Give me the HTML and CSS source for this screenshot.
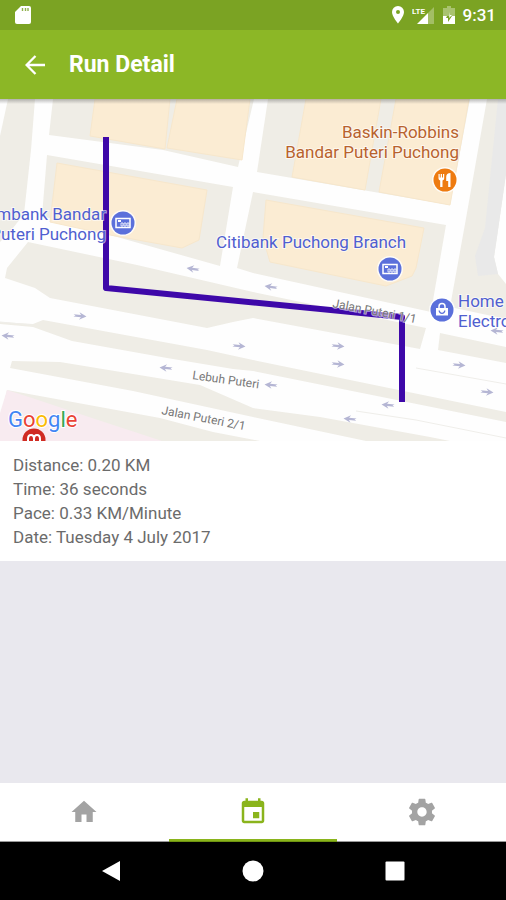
FILE: index.html
```html
<!DOCTYPE html>
<html lang="en">
<head>
    <meta charset="UTF-8">
    <meta name="viewport" content="width=device-width, initial-scale=1.0">
    <title>Run Detail</title>
    <link rel="stylesheet" href="styles.css">
</head>
<body>
    <div class="status-bar">
        <svg class="status-icon sd-icon" width="16" height="20" viewBox="0 0 16 20">
            <path fill="#fff" d="M6 1h8a2 2 0 0 1 2 2v14a2 2 0 0 1-2 2H2a2 2 0 0 1-2-2V7z"/>
            <path stroke="#8fb04c" stroke-width="1.4" d="M7.5 3v3M10.5 3v3M13 3v3"/>
        </svg>
        <svg class="status-icon" width="12" height="18" viewBox="0 0 12 18">
            <path fill="#fff" fill-rule="evenodd" d="M6 0a6 6 0 0 1 6 6c0 4.500-6 11.500-6 11.500S0 10.500 0 6a6 6 0 0 1 6-6zm0 4a2 2 0 1 0 0 4 2 2 0 0 0 0-4z"/>
        </svg>
        <svg class="status-icon" width="23" height="20" viewBox="0 0 23 20">
            <path fill="#fff" fill-opacity=".3" d="M22 2v17h-6V8z"/>
            <path fill="#fff" d="M16 8v11H5z"/>
            <path class="lte-back" d="M0 0h13v9.500H0z"/>
            <text class="lte" x="0" y="9">LTE</text>
        </svg>
        <svg class="status-icon" width="12" height="18" viewBox="0 0 12 18">
            <path fill="#fff" fill-opacity=".35" d="M4 0h4v2h4v8H0V2h4z"/>
            <path fill="#fff" d="M0 10h4l-1 2h2v4l4-6h3v8H0z"/>
            <path fill="#fff" d="M7 6v3h2l-3 3z"/>
        </svg>
        <span class="clock">9:31</span>
    </div>

    <header class="app-bar">
        <button class="back-btn" type="button" aria-label="Back">
            <svg width="20" height="20" viewBox="0 0 20 20">
                <path fill="none" stroke="#fff" stroke-width="2.300" d="M20 10H2M10.500 1L1.600 10l8.900 9"/>
            </svg>
        </button>
        <h1>Run Detail</h1>
    </header>

    <main>
        <svg class="map" viewBox="0 99 506 342" role="img" aria-label="Map of the run">
            <defs>
                <path id="arrow" d="M-6.500-1.100H1l-1.800-2.700L6.500 0l-7.300 3.800L1 1.100h-7.500l2-1.100z"/>
                <g id="bank">
                    <circle class="pin-ring" r="13"/>
                    <circle r="11.500" fill="#5b70db"/>
                    <path fill="none" stroke="#fff" stroke-width="1.500" d="M-7-4.500H7v9H-7z"/>
                    <path fill="#fff" d="M-5-3h3v2h-3z"/>
                    <path fill="none" stroke="#fff" stroke-width=".8" d="M-2 0h2v3h-2zM1 0h2v3H1zM4 0h2v3H4z"/>
                </g>
                <linearGradient id="barShadow" x1="0" y1="0" x2="0" y2="1">
                    <stop offset="0" stop-color="#555" stop-opacity=".4"/>
                    <stop offset="1" stop-color="#555" stop-opacity="0"/>
                </linearGradient>
            </defs>

            <!-- roads are the white ground, land blocks go on top -->
            <rect y="99" width="506" height="342" fill="#fefefe"/>
            <g class="land">
                <path d="M8 99h27l-4 51-7 64-11 14-13 14V136z"/>
                <path d="M53 99h201l-16 68-75-17-114-15z"/>
                <path d="M47 155l186 32-13 79-110-31-68-19z"/>
                <path d="M268 99h202l-20 106-193-33z"/>
                <path d="M253 192l193 33-15 87-178-39-16-5z"/>
                <path d="M487 99h19v75l-8 56-4 27 4 17 8 10v35l-56-12 15-83z"/>
                <path d="M28 242l109 23 116 27 173 36-6 21-167-31-20 4-26 6-157-30-15-10-30-10 2-10z"/>
                <path d="M440 333l66 14v16l-68-13z"/>
                <path d="M0 322l33 2 10-4 164 30 46 10 170 35 83 17v10l-253-51-20-2-66-11-95-17-39-14-33-3z"/>
                <path d="M12 361l48 1 140 23 53 23 67 9 110 20 20 4h-84l-113-24-120-26-123-23z"/>
                <path d="M7 390l153 28 53 14 47 9H0v-22z"/>
            </g>
            <path fill="#f8ebf0" d="M7 390l28 9 60 20 67 22H0v-28z"/>
            <path fill="#e9e9e9" d="M498 99h8v75l-8 56-4 27 4 17-20 2-3-20 10-28z"/>
            <path class="lane" d="M356 411l60 9 90 18M416 368l90 16M0 322l33 3"/>

            <g class="building">
                <path d="M95 99h75l-5 50-75-13z"/>
                <path d="M177 99h73l-8 61-75-12z"/>
                <path d="M57 163l150 27-8 50-17 8-72-13-60-13z"/>
                <path d="M306 99h75l-16 91-73-13z"/>
                <path d="M396 99h73l-19 106-71-13z"/>
                <path d="M266 200l158 28-8 40-4 8-26 10-116-24-7-24z"/>
            </g>

            <g class="arrows">
                <use href="#arrow" transform="translate(193 269) rotate(188)"/>
                <use href="#arrow" transform="translate(271 287) rotate(188)"/>
                <use href="#arrow" transform="translate(80 316) rotate(5)"/>
                <use href="#arrow" transform="translate(239 346) rotate(5)"/>
                <use href="#arrow" transform="translate(8 336) rotate(185)"/>
                <use href="#arrow" transform="translate(166 368) rotate(185)"/>
                <use href="#arrow" transform="translate(271 385) rotate(185)"/>
                <use href="#arrow" transform="translate(338 346) rotate(5)"/>
                <use href="#arrow" transform="translate(338 364) rotate(5)"/>
                <use href="#arrow" transform="translate(459 365) rotate(5)"/>
                <use href="#arrow" transform="translate(487 392) rotate(5)"/>
                <use href="#arrow" transform="translate(388 405) rotate(185)"/>
                <use href="#arrow" transform="translate(350 419) rotate(185)"/>
                <use href="#arrow" transform="translate(497 331) rotate(185)"/>
            </g>

            <path class="route" d="M106 137v151l296 29v85"/>

            <text class="street" transform="translate(332 307) rotate(11)">Jalan Puteri 1/1</text>
            <text class="street" transform="translate(192 379) rotate(8)">Lebuh Puteri</text>
            <text class="street" transform="translate(161 414) rotate(11)">Jalan Puteri 2/1</text>

            <g class="place food" text-anchor="end">
                <text x="459" y="138">Baskin-Robbins</text>
                <text x="459" y="158">Bandar Puteri Puchong</text>
            </g>
            <g class="place" text-anchor="end">
                <text x="106" y="220">Ambank Bandar</text>
                <text x="106" y="240">Puteri Puchong</text>
            </g>
            <g class="place">
                <text x="216" y="248">Citibank Puchong Branch</text>
                <text x="458" y="307">Home</text>
                <text x="458" y="327">Electronics</text>
            </g>

            <use href="#bank" transform="translate(123 223)"/>
            <use href="#bank" transform="translate(390 269)"/>
            <g transform="translate(445 180)">
                <circle class="pin-ring" r="13"/>
                <circle r="11.500" fill="#ee7b10"/>
                <path fill="#fff" d="M-6.500-6h1.200v3.500h1V-6h1.300v3.500h1V-6h1.200v4.500Q-.8 0-2.500.6V7h-2.300V.6Q-6.500 0-6.500-1.500z"/>
                <path fill="#fff" d="M5.500-7V7H3.200V1H1.200v-4q0-4 4.300-4z"/>
            </g>
            <g transform="translate(442 310)">
                <circle class="pin-ring" r="13"/>
                <circle r="11.500" fill="#5b70db"/>
                <path fill="#fff" d="M-6-2H6v7.500H-6z"/>
                <path fill="none" stroke="#fff" stroke-width="1.500" d="M-3-2v-1.500a3 3 0 0 1 6 0V-2"/>
                <path fill="none" stroke="#5b70db" stroke-width="1.300" d="M-2.800 0.500a2.800 2.800 0 0 0 5.600 0"/>
            </g>
            <g transform="translate(34 440)">
                <circle r="11.500" fill="#d02b22"/>
                <path fill="none" stroke="#fff" stroke-width="2" d="M-6 4v-5q0-4 3-4t3 4v5M0 4v-5q0-4 3-4t3 4v5"/>
            </g>
            <text class="google" x="8" y="427"><tspan fill="#4285f4">G</tspan><tspan fill="#ea4335">o</tspan><tspan fill="#fbbc05">o</tspan><tspan fill="#4285f4">g</tspan><tspan fill="#34a853">l</tspan><tspan fill="#ea4335">e</tspan></text>

            <rect y="99" width="506" height="5" fill="url(#barShadow)"/>
        </svg>

        <div class="run-info">
            <p>Distance: 0.20 KM</p>
            <p>Time: 36 seconds</p>
            <p>Pace: 0.33 KM/Minute</p>
            <p>Date: Tuesday 4 July 2017</p>
        </div>
    </main>

    <nav class="tabs">
        <a class="tab" href="#home" aria-label="Home">
            <svg width="30" height="30" viewBox="0 0 24 24">
                <path d="M10 20v-6h4v6h5v-8h3L12 3 2 12h3v8z"/>
            </svg>
        </a>
        <a class="tab active" href="#runs" aria-label="Runs">
            <svg width="30" height="30" viewBox="0 0 24 24">
                <path d="M17 12h-5v5h5v-5zM16 1v2H8V1H6v2H5c-1.110 0-1.990.9-1.990 2L3 19c0 1.100.89 2 2 2h14c1.100 0 2-.9 2-2V5c0-1.100-.9-2-2-2h-1V1h-2zm3 18H5V8h14v11z"/>
            </svg>
        </a>
        <a class="tab" href="#settings" aria-label="Settings">
            <svg width="32" height="32" viewBox="0 0 24 24">
                <path d="M19.430 12.980c.04-.32.07-.64.07-.98s-.03-.66-.07-.98l2.110-1.650c.19-.15.24-.42.12-.64l-2-3.460c-.12-.22-.39-.3-.61-.22l-2.490 1c-.52-.4-1.080-.73-1.690-.98l-.38-2.650C14.460 2.180 14.250 2 14 2h-4c-.25 0-.46.18-.49.42l-.38 2.650c-.61.25-1.170.59-1.690.98l-2.490-1c-.23-.09-.49 0-.61.22l-2 3.460c-.13.22-.07.49.12.64l2.110 1.650c-.04.32-.07.65-.07.98s.03.66.07.98l-2.110 1.650c-.19.15-.24.42-.12.64l2 3.460c.12.22.39.3.61.22l2.490-1c.52.4 1.080.73 1.690.98l.38 2.650c.03.24.24.42.49.42h4c.25 0 .46-.18.49-.42l.38-2.650c.61-.25 1.170-.59 1.690-.98l2.490 1c.23.09.49 0 .61-.22l2-3.460c.12-.22.07-.49-.12-.64l-2.110-1.650zM12 15.500c-1.930 0-3.500-1.570-3.500-3.500s1.570-3.500 3.500-3.500 3.500 1.570 3.500 3.500-1.570 3.500-3.500 3.500z"/>
            </svg>
        </a>
    </nav>

    <div class="system-nav">
        <button type="button" aria-label="System back">
            <svg width="22" height="22" viewBox="0 0 22 22"><path d="M20 1v20L2 11z"/></svg>
        </button>
        <button type="button" aria-label="System home">
            <svg width="22" height="22" viewBox="0 0 22 22"><circle cx="11" cy="11" r="10.500"/></svg>
        </button>
        <button type="button" aria-label="Recent apps">
            <svg width="22" height="22" viewBox="0 0 22 22"><rect x="1.500" y="1.500" width="19" height="19" rx="1"/></svg>
        </button>
    </div>
</body>
</html>
```

FILE: styles.css
```css
* {
    margin: 0;
    padding: 0;
    box-sizing: border-box;
    font-family: Roboto, 'Liberation Sans', sans-serif;
}

body {
    min-height: 100vh;
    display: flex;
    flex-direction: column;
    background-color: #e9e8ee;
}

button {
    background: none;
    border: none;
    cursor: pointer;
}

svg {
    display: block;
}

.status-bar {
    display: flex;
    align-items: center;
    gap: 8px;
    height: 30px;
    padding: 0 10px 0 15px;
    background-color: #7ba323;
    color: white;
}

.sd-icon {
    margin-right: auto;
}

.lte-back {
    fill: #7ba323;
}

.lte {
    fill: white;
    font-size: 8px;
    font-weight: 700;
}

.clock {
    font-size: 17px;
    font-weight: 500;
    line-height: 30px;
}

.app-bar {
    display: flex;
    align-items: center;
    gap: 24px;
    height: 69px;
    padding: 0 25px;
    background-color: #8cb726;
    color: white;
}

.app-bar h1 {
    font-size: 23px;
    font-weight: 700;
    line-height: 30px;
}

main {
    flex: 1;
}

.map {
    width: 100%;
    height: auto;
}

.land {
    fill: #efede6;
}

.lane {
    fill: none;
    stroke: #efeeea;
}

.building {
    fill: #fbecd3;
    stroke: #f7e7cc;
}

.arrows {
    fill: #b5b6d4;
}

.route {
    fill: none;
    stroke: #3e08a9;
    stroke-width: 6;
    stroke-linejoin: round;
}

.place,
.street {
    stroke: rgba(255, 255, 255, 0.6);
    stroke-width: 2px;
    paint-order: stroke;
}

.place {
    fill: #505fd0;
    font-size: 17px;
}

.food {
    fill: #b8622e;
}

.street {
    fill: #777;
    font-size: 12px;
}

.pin-ring {
    fill: #fff;
    fill-opacity: 0.8;
}

.google {
    font-family: Lato, sans-serif;
    font-size: 22px;
    font-weight: 400;
    stroke: white;
    stroke-width: 2px;
    paint-order: stroke;
}

.run-info {
    padding: 12px 13px;
    background-color: white;
    color: #6b6b6b;
    font-size: 17px;
    line-height: 24px;
}

.tabs {
    display: flex;
    height: 59px;
    background-color: white;
    border-bottom: 1px solid #999;
}

.tab {
    flex: 1;
    display: flex;
    justify-content: center;
    align-items: center;
    fill: #a3a3a3;
}

.tab.active {
    fill: #8ab41c;
    box-shadow: inset 0 -2px #8ab41c, 0 1px #6f9411;
}

.system-nav {
    display: flex;
    justify-content: center;
    align-items: center;
    gap: 120px;
    height: 58px;
    background-color: black;
    fill: white;
}
```
